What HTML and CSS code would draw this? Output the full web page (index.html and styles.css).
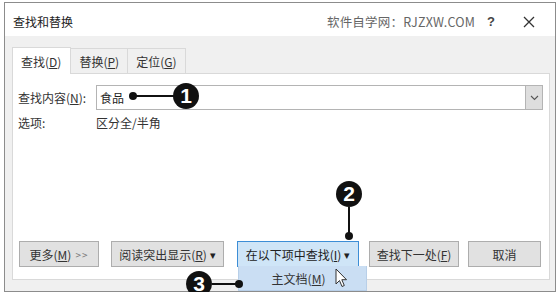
FILE: index.html
```html
<!DOCTYPE html>
<html lang="zh">
<head>
<meta charset="utf-8">
<link rel="stylesheet" href="styles.css">
</head>
<body>
<div class="dialog">
  <div class="titlebar">
    <span class="title">查找和替换</span>
    <span class="site">软件自学网：RJZXW.COM</span>
    <span class="help">?</span>
    <span class="close">
      <svg width="12" height="12" viewBox="0 0 12 12"><path d="M1 1L11 11M11 1L1 11" stroke="#333" stroke-width="1.3" fill="none"/></svg>
    </span>
  </div>
  <div class="body">
    <div class="tabs">
      <div class="tab active">查找(<u>D</u>)</div>
      <div class="tab">替换(<u>P</u>)</div>
      <div class="tab">定位(<u>G</u>)</div>
    </div>
    <div class="panel">
      <div class="row">
        <span class="label">查找内容(<u>N</u>):</span>
        <div class="combo">
          <span class="value">食品</span>
          <span class="drop">
            <svg width="9" height="6" viewBox="0 0 9 6"><path d="M1 1L4.5 4.5L8 1" stroke="#555" stroke-width="1.1" fill="none"/></svg>
          </span>
        </div>
      </div>
      <div class="row opts">
        <span class="label">选项:</span>
        <span class="optval">区分全/半角</span>
      </div>
      <div class="spacer"></div>
      <div class="buttons">
        <div class="btn more">更多(<u>M</u>) <span class="gt">&gt;&gt;</span></div>
        <div class="btn read">阅读突出显示(<u>R</u>) <span class="tri">▾</span></div>
        <div class="btn findin">在以下项中查找(<u>I</u>) <span class="tri">▾</span></div>
        <div class="btn next">查找下一处(<u>F</u>)</div>
        <div class="btn cancel">取消</div>
      </div>
    </div>
  </div>

  <div class="menu">主文档(<u>M</u>)</div>
  <svg class="cursor" width="14" height="20" viewBox="0 0 14 20"><path d="M1 1L1 16L4.5 12.5L7 18.5L9.3 17.5L6.8 11.7L11.5 11.7Z" fill="#fff" stroke="#333" stroke-width="1"/></svg>

  <div class="callout c1">
    <span class="dot"></span><span class="hline"></span><span class="num">1</span>
  </div>
  <div class="callout c2">
    <span class="num">2</span><span class="vline"></span><span class="dot"></span>
  </div>
  <div class="callout c3">
    <span class="num">3</span><span class="hline"></span><span class="dot"></span>
  </div>
</div>
</body>
</html>
```
FILE: styles.css
```css
* { box-sizing: border-box; }
html, body { margin: 0; padding: 0; background: #fff; }
body {
  font-family: "Noto Sans CJK SC", "Noto Sans", sans-serif;
  font-size: 12px;
  color: #2a2a2a;
  padding: 2px 0 0 4px;
}
u { text-decoration: underline; text-underline-offset: 1px; }
.dialog {
  position: relative;
  width: 552px;
  height: 290px;
  border: 1px solid #8c8c8c;
  background: #f0f0f0;
  display: flex;
  flex-direction: column;
}
.titlebar {
  height: 33px;
  background: #fff;
  display: flex;
  align-items: center;
  padding: 4px 0 0 8px;
}
.title { font-size: 12px; color: #222; flex: 1; }
.site { font-size: 12.5px; color: #666; letter-spacing: 0.2px; }
.help { font-family: "Liberation Sans", sans-serif; font-weight: bold; font-size: 13px; color: #444; margin-left: 12px; width: 10px; }
.close { width: 58px; display: flex; justify-content: center; padding-left: 6px; }
.body {
  flex: 1;
  display: flex;
  flex-direction: column;
  padding: 11px 5px 11px 7px;
}
.tabs { display: flex; height: 26px; position: relative; z-index: 1; }
.tab {
  padding: 0 8px;
  display: flex;
  align-items: center;
  border: 1px solid #d9d9d9;
  border-bottom: none;
  background: #f0f0f0;
  color: #333;
  height: 25px;
  margin-top: 1px;
  margin-left: -1px;
  white-space: nowrap;
}
.tab.active {
  background: #fff;
  height: 27px;
  margin-top: 0;
  margin-left: 0;
  padding: 0 9px 0 8px;
  border-color: #d9d9d9;
}
.panel {
  flex: 1;
  background: #fff;
  border: 1px solid #d9d9d9;
  display: flex;
  flex-direction: column;
  padding: 11px 6px 12px 5px;
}
.row { display: flex; align-items: center; }
.label { width: 78px; color: #333; }
.combo {
  flex: 1;
  height: 25px;
  border: 1px solid #b4b4b4;
  display: flex;
  align-items: center;
  padding-left: 3px;
}
.value { flex: 1; color: #222; }
.drop {
  width: 17px;
  height: 23px;
  background: #dedede;
  border-left: 1px solid #b4b4b4;
  display: flex;
  align-items: center;
  justify-content: center;
}
.opts { margin-top: 4px; }
.optval { color: #333; }
.spacer { flex: 1; }
.buttons { display: flex; align-items: center; padding-left: 1px; }
.btn {
  height: 26px;
  background: #e1e1e1;
  border: 1px solid #adadad;
  display: flex;
  align-items: center;
  justify-content: center;
  color: #333;
  white-space: nowrap;
}
.more { width: 80px; }
.gt { color: #777; font-size: 10px; margin-left: 4px; letter-spacing: 1px; }
.tri { font-size: 11px; margin-left: 3px; color: #222; }
.read { width: 113px; margin-left: 12px; }
.findin { width: 122px; margin-left: 13px; background: #cfe5f7; border-color: #3d8ed6; color: #222; }
.next { width: 90px; margin-left: 10px; }
.cancel { width: 73px; margin-left: 9px; }

.menu {
  position: absolute;
  left: 233px;
  top: 263px;
  width: 129px;
  height: 25px;
  background: #cadef3;
  border: 1px solid #b8cfe8;
  border-top: none;
  display: flex;
  align-items: center;
  justify-content: center;
  padding-right: 8px;
  color: #333;
}
.cursor { position: absolute; left: 330px; top: 265px; }

.callout { position: absolute; display: flex; align-items: center; }
.num {
  width: 26px;
  height: 26px;
  border-radius: 50%;
  background: #111;
  color: #fff;
  font-family: "Liberation Sans", sans-serif;
  font-weight: bold;
  font-size: 21px;
  display: flex;
  align-items: center;
  justify-content: center;
  flex: none;
}
.dot { width: 8px; height: 8px; border-radius: 50%; background: #111; flex: none; }
.hline { height: 2px; background: #111; }
.vline { width: 2px; background: #111; }
.c1 { left: 124px; top: 80px; }
.c1 .hline { width: 38px; margin-left: -1px; margin-right: -1px; }
.c2 { left: 331px; top: 178px; flex-direction: column; }
.c2 .vline { height: 28px; }
.c2 .dot { margin-top: -3px; }
.c3 { left: 181px; top: 268px; }
.c3 .hline { width: 25px; }
.c3 .dot { margin-left: -2px; }
```
